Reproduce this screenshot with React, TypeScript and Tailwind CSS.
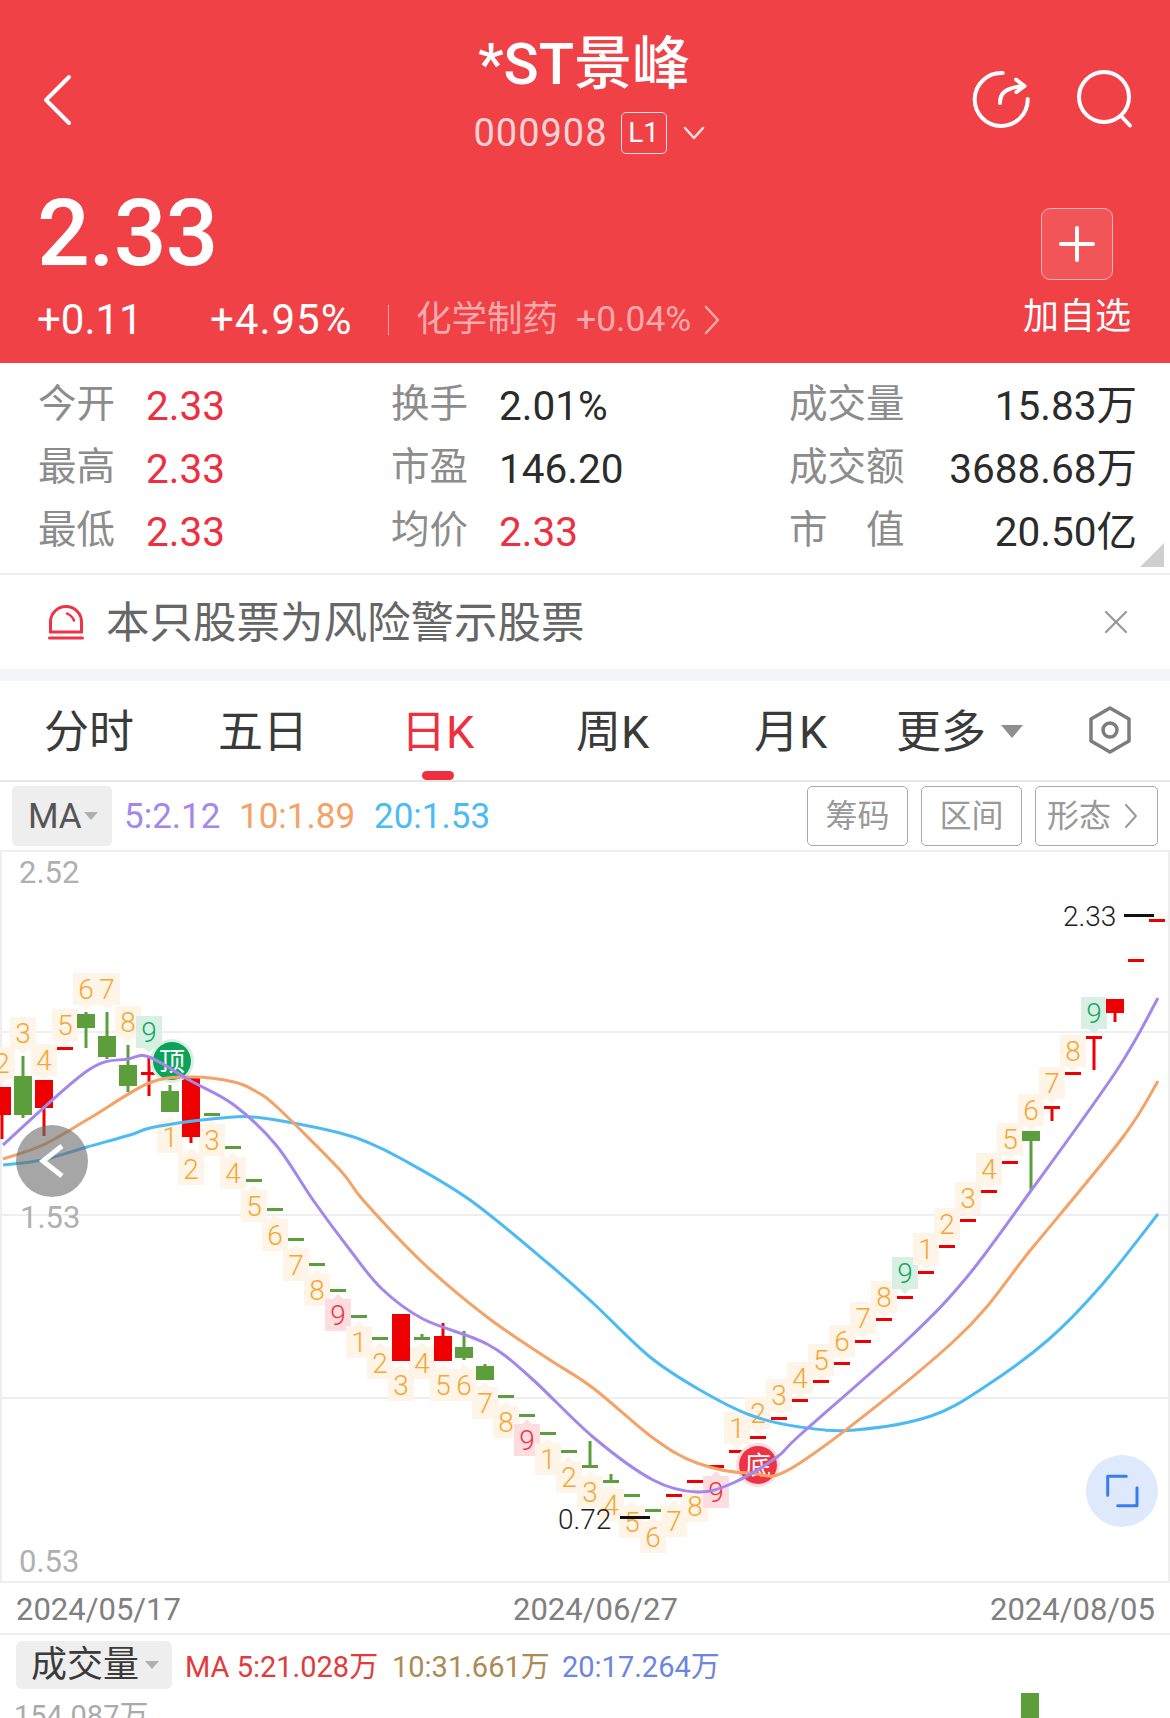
// K-line quote page: *ST景峰
import { ChevronRight, X } from 'lucide-react';

const SANS = "font-['Roboto','Noto_Sans_CJK_SC',sans-serif]";
const UP = '#ee0000';
const DOWN = '#5c9e3c';

// [x, kind, bodyTop, bodyBottom, wickTop, wickBottom]
type Candle = [number, 'r' | 'g', number, number, number, number];
const candles: Candle[] = [
  [2, 'r', 1087, 1115, 1087, 1139],
  [23, 'g', 1076, 1115, 1056, 1118],
  [44, 'r', 1080, 1108, 1080, 1136],
  [65, 'r', 1047, 1050, 1047, 1050],
  [86, 'g', 1014, 1028, 1012, 1048],
  [107, 'g', 1036, 1057, 1012, 1059],
  [128, 'g', 1065, 1086, 1045, 1092],
  [149, 'r', 1072, 1075, 1056, 1096],
  [170, 'g', 1091, 1112, 1085, 1112],
  [191, 'r', 1077, 1137, 1077, 1143],
  [212, 'g', 1113, 1116, 1113, 1116],
  [233, 'g', 1146, 1149, 1146, 1149],
  [254, 'g', 1179, 1182, 1179, 1182],
  [275, 'g', 1208, 1211, 1208, 1211],
  [296, 'g', 1238, 1241, 1238, 1241],
  [317, 'g', 1263, 1266, 1263, 1266],
  [338, 'g', 1289, 1292, 1289, 1292],
  [359, 'g', 1315, 1318, 1315, 1318],
  [380, 'g', 1337, 1340, 1337, 1340],
  [401, 'r', 1314, 1361, 1314, 1361],
  [422, 'g', 1337, 1340, 1334, 1340],
  [443, 'r', 1336, 1361, 1323, 1361],
  [464, 'g', 1347, 1358, 1331, 1360],
  [485, 'g', 1366, 1380, 1364, 1380],
  [506, 'g', 1395, 1398, 1395, 1398],
  [527, 'g', 1414, 1417, 1414, 1417],
  [548, 'g', 1432, 1435, 1432, 1435],
  [569, 'g', 1450, 1453, 1450, 1453],
  [590, 'g', 1465, 1468, 1441, 1468],
  [611, 'g', 1480, 1483, 1474, 1483],
  [632, 'g', 1494, 1497, 1494, 1497],
  [653, 'g', 1509, 1512, 1509, 1512],
  [674, 'r', 1494, 1497, 1494, 1497],
  [695, 'r', 1480, 1483, 1480, 1483],
  [716, 'r', 1465, 1468, 1465, 1468],
  [737, 'r', 1450, 1453, 1450, 1453],
  [758, 'r', 1436, 1439, 1436, 1439],
  [779, 'r', 1417, 1420, 1417, 1420],
  [800, 'r', 1399, 1402, 1399, 1402],
  [821, 'r', 1380, 1383, 1380, 1383],
  [842, 'r', 1362, 1365, 1362, 1365],
  [863, 'r', 1340, 1343, 1340, 1343],
  [884, 'r', 1318, 1321, 1318, 1321],
  [905, 'r', 1296, 1299, 1296, 1299],
  [926, 'r', 1271, 1274, 1271, 1274],
  [947, 'r', 1245, 1248, 1245, 1248],
  [968, 'r', 1219, 1222, 1219, 1222],
  [989, 'r', 1190, 1193, 1190, 1193],
  [1010, 'r', 1161, 1164, 1161, 1164],
  [1031, 'g', 1131, 1141, 1131, 1191],
  [1052, 'r', 1106, 1109, 1106, 1121],
  [1073, 'r', 1072, 1075, 1072, 1075],
  [1094, 'r', 1036, 1039, 1036, 1070],
  [1115, 'r', 999, 1013, 999, 1022],
  [1136, 'r', 959, 962, 959, 962],
  [1157, 'r', 919, 922, 919, 922],
];

// [digit, x, y, pointer direction, tone]
type Label = [string, number, number, 'u' | 'd', 'o' | 'g' | 'r'];
const labels: Label[] = [
  ['2', 2, 1063, 'd', 'o'], ['3', 23, 1033, 'd', 'o'], ['4', 44, 1060, 'd', 'o'], ['5', 65, 1025, 'd', 'o'],
  ['6', 86, 989, 'd', 'o'], ['7', 107, 989, 'd', 'o'], ['8', 128, 1022, 'd', 'o'], ['9', 149, 1032, 'd', 'g'],
  ['1', 170, 1137, 'u', 'o'], ['2', 191, 1169, 'u', 'o'], ['3', 212, 1140, 'u', 'o'], ['4', 233, 1173, 'u', 'o'],
  ['5', 254, 1206, 'u', 'o'], ['6', 275, 1235, 'u', 'o'], ['7', 296, 1265, 'u', 'o'], ['8', 317, 1290, 'u', 'o'],
  ['9', 338, 1315, 'u', 'r'], ['1', 359, 1342, 'u', 'o'], ['2', 380, 1363, 'u', 'o'], ['3', 401, 1385, 'u', 'o'],
  ['4', 422, 1363, 'u', 'o'], ['5', 443, 1385, 'u', 'o'], ['6', 464, 1385, 'u', 'o'], ['7', 485, 1403, 'u', 'o'],
  ['8', 506, 1422, 'u', 'o'], ['9', 527, 1440, 'u', 'r'], ['1', 548, 1459, 'u', 'o'], ['2', 569, 1477, 'u', 'o'],
  ['3', 590, 1492, 'u', 'o'], ['4', 611, 1505, 'u', 'o'], ['5', 632, 1522, 'u', 'o'], ['6', 653, 1537, 'u', 'o'],
  ['7', 674, 1521, 'u', 'o'], ['8', 695, 1506, 'u', 'o'], ['9', 716, 1492, 'u', 'r'], ['1', 737, 1428, 'd', 'o'],
  ['2', 758, 1413, 'd', 'o'], ['3', 779, 1395, 'd', 'o'], ['4', 800, 1378, 'd', 'o'], ['5', 821, 1360, 'd', 'o'],
  ['6', 842, 1341, 'd', 'o'], ['7', 863, 1318, 'd', 'o'], ['8', 884, 1297, 'd', 'o'], ['9', 905, 1273, 'd', 'g'],
  ['1', 926, 1249, 'd', 'o'], ['2', 947, 1224, 'd', 'o'], ['3', 968, 1198, 'd', 'o'], ['4', 989, 1169, 'd', 'o'],
  ['5', 1010, 1139, 'd', 'o'], ['6', 1031, 1110, 'd', 'o'], ['7', 1052, 1083, 'd', 'o'], ['8', 1073, 1051, 'd', 'o'],
  ['9', 1094, 1013, 'd', 'g'],
];

const toneFill = { o: '#fff4e8', g: '#d8f0e4', r: '#fddde0' };
const toneText = { o: '#f5a733', g: '#12a860', r: '#ee3344' };

const purple = [[3, 1145], [87, 1071], [128, 1059], [149, 1057], [191, 1081], [234, 1105], [276, 1145], [313, 1200], [350, 1250], [382, 1289], [423, 1319], [487, 1344], [530, 1377], [593, 1437], [653, 1480], [697, 1492], [733, 1483], [777, 1457], [800, 1435], [907, 1340], [967, 1277], [1030, 1192], [1117, 1070], [1158, 998]];
const orange = [[3, 1159], [43, 1145], [90, 1118], [149, 1083], [191, 1077], [234, 1082], [257, 1092], [277, 1107], [340, 1170], [363, 1200], [423, 1263], [487, 1317], [547, 1358], [593, 1388], [653, 1438], [697, 1463], [750, 1473], [800, 1463], [955, 1340], [1033, 1247], [1123, 1137], [1158, 1081]];
const blue = [[3, 1165], [42, 1160], [87, 1147], [130, 1135], [150, 1128], [193, 1121], [233, 1117], [253, 1117], [293, 1123], [340, 1133], [367, 1142], [400, 1158], [470, 1200], [550, 1265], [593, 1303], [650, 1357], [700, 1390], [750, 1415], [800, 1427], [855, 1430], [931, 1416], [986, 1386], [1048, 1340], [1100, 1287], [1158, 1214]];

// catmull-rom through the sampled points
function smooth(pts: number[][]) {
  let d = `M${pts[0][0]} ${pts[0][1]}`;
  for (let i = 0; i < pts.length - 1; i++) {
    const p0 = pts[Math.max(i - 1, 0)];
    const p1 = pts[i];
    const p2 = pts[i + 1];
    const p3 = pts[Math.min(i + 2, pts.length - 1)];
    const c1x = p1[0] + (p2[0] - p0[0]) / 6;
    const c1y = p1[1] + (p2[1] - p0[1]) / 6;
    const c2x = p2[0] - (p3[0] - p1[0]) / 6;
    const c2y = p2[1] - (p3[1] - p1[1]) / 6;
    d += ` C${c1x} ${c1y} ${c2x} ${c2y} ${p2[0]} ${p2[1]}`;
  }
  return d;
}

function KLine() {
  return (
    <svg viewBox="0 850 1170 731" width={1170} height={731} className="block">
      <line x1={0} x2={1170} y1={851} y2={851} stroke="#eeeeee" strokeWidth={2} />
      {[1032, 1215, 1398].map(y => (
        <line key={y} x1={2} x2={1168} y1={y} y2={y} stroke="#eeeeee" strokeWidth={2} />
      ))}
      <line x1={1} x2={1} y1={850} y2={1581} stroke="#eeeeee" strokeWidth={2} />
      <line x1={1169} x2={1169} y1={850} y2={1581} stroke="#eeeeee" strokeWidth={2} />

      <g fontFamily="Roboto, sans-serif" fontSize={31} fill="#b0b0b0">
        <text x={19} y={883}>2.52</text>
        <text x={20} y={1228}>1.53</text>
        <text x={19} y={1572}>0.53</text>
      </g>

      {labels.map(([d, x, y, dir, tone], i) => (
        <g key={i}>
          <rect x={x - 13} y={y - 16} width={26} height={32} fill={toneFill[tone]} />
          <polygon
            points={dir === 'd' ? `${x - 5},${y + 16} ${x + 5},${y + 16} ${x},${y + 21}` : `${x - 5},${y - 16} ${x + 5},${y - 16} ${x},${y - 21}`}
            fill={toneFill[tone]}
          />
          <text x={x} y={y + 10} textAnchor="middle" fontFamily="Roboto, sans-serif" fontWeight={300} fontSize={28} fill={toneText[tone]}>{d}</text>
        </g>
      ))}

      {candles.map(([x, k, t, b, wt, wb], i) => {
        const c = k === 'r' ? UP : DOWN;
        return (
          <g key={i}>
            <rect x={x - 1.5} y={wt} width={3} height={wb - wt} fill={c} />
            {b - t <= 3
              ? <rect x={x - 8} y={t} width={16} height={3} fill={c} />
              : <rect x={x - 9} y={t} width={18} height={b - t} fill={c} />}
          </g>
        );
      })}

      <circle cx={172} cy={1061} r={22} fill="#d8f0e4" />
      <circle cx={172} cy={1061} r={19} fill="#0ba35a" />
      <text x={172} y={1071} textAnchor="middle" fontFamily="'Noto Sans CJK SC', sans-serif" fontSize={26} fill="#ffffff">顶</text>
      <circle cx={758} cy={1465} r={22} fill="#fbdde0" />
      <circle cx={758} cy={1465} r={19} fill="#ee3344" />
      <text x={758} y={1475} textAnchor="middle" fontFamily="'Noto Sans CJK SC', sans-serif" fontSize={26} fill="#ffffff">底</text>

      <path d={smooth(blue)} fill="none" stroke="#4dbbf3" strokeWidth={3} />
      <path d={smooth(orange)} fill="none" stroke="#f4a266" strokeWidth={3} />
      <path d={smooth(purple)} fill="none" stroke="#a586ea" strokeWidth={3} />

      <g fontFamily="Roboto, sans-serif" fontSize={28} fontWeight={300} fill="#222222">
        <text x={558} y={1529}>0.72</text>
        <text x={1063} y={926}>2.33</text>
      </g>
      <rect x={620} y={1516} width={30} height={3} fill="#111111" />
      <rect x={1124} y={914} width={30} height={3} fill="#111111" />
    </svg>
  );
}

function StatRow({ cells }: { cells: [string, string, boolean][] }) {
  return (
    <div className="grid grid-cols-[353px_398px_1fr] h-[63px] items-center">
      {cells.map(([label, value, red], i) => (
        <div key={label} className={`flex items-center ${i === 2 ? 'justify-between' : ''}`}>
          <span className={`text-[38.5px] leading-none text-[#8c8c8c] ${i === 2 ? '' : 'w-[108px]'}`}>{label}</span>
          <span className={`text-[40.5px] leading-none mt-[4px] ${red ? 'text-[#ee2f40]' : 'text-[#2b2b2b]'}`}>{value}</span>
        </div>
      ))}
    </div>
  );
}

export default function App() {
  return (
    <div className={`${SANS} w-[1170px] h-[1718px] overflow-hidden bg-white`}>
      {/* Red quote header */}
      <div className="h-[363px] bg-[#f04147] text-white flex flex-col">
        <div className="h-[180px] flex items-start justify-between">
          <svg width="34" height="52" viewBox="0 0 34 52" className="ml-[41px] mt-[74px]" fill="none" stroke="#ffffff" strokeWidth="4" strokeLinecap="round" strokeLinejoin="round">
            <path d="M28 3 5 26l23 23" />
          </svg>
          <div className="flex flex-col items-center ml-[132px]">
            <div className="text-[58px] leading-none font-medium mt-[35px] mr-[10px]">*ST景峰</div>
            <div className="flex items-center mt-[19px]">
              <span className="text-[38px] leading-none tracking-[1px] text-[#fdd3d5]">000908</span>
              <span className="ml-[13px] w-[46px] h-[42px] rounded-[5px] border border-[#fde0e0] flex items-center justify-center text-[28px] leading-none">L1</span>
              <svg width="22" height="14" viewBox="0 0 22 14" fill="none" stroke="#fde0e0" strokeWidth="2.500" strokeLinecap="round" strokeLinejoin="round" className="ml-[16px]">
                <path d="M2 2l9 10 9-10" />
              </svg>
            </div>
          </div>
          <div className="flex items-center gap-[45px] mr-[36px] mt-[68px]">
            <svg width="60" height="62" viewBox="0 0 60 62" fill="none" stroke="#ffffff" strokeWidth="4" strokeLinecap="round" strokeLinejoin="round">
              <path d="M31.700 5A26.500 26.500 0 1 0 56.700 31" />
              <path d="M29 35c0-9 4-15 23-17" />
              <path d="M45 11.500l8.500 6.500-8 6" />
            </svg>
            <svg width="58" height="60" viewBox="0 0 58 60" fill="none" stroke="#ffffff" strokeWidth="4" strokeLinecap="round">
              <circle cx="28" cy="28" r="25" />
              <path d="M45.500 47.500l8.500 9" />
            </svg>
          </div>
        </div>
        <div className="flex justify-between items-start">
          <div className="pl-[37px]">
            <div className="text-[93px] leading-none font-medium tracking-[-1px] mt-[7px]">2.33</div>
            <div className="flex items-center h-[44px] mt-[18px]">
              <span className="text-[42px] leading-none w-[173px]">+0.11</span>
              <span className="text-[42px] leading-none tracking-[1px] w-[178px]">+4.95%</span>
              <span className="w-px h-[30px] bg-[#f9a0a2]" />
              <span className="ml-[27px] text-[35.500px] leading-none text-[#f9a9aa]">化学制药</span>
              <span className="ml-[18px] text-[35.500px] leading-none text-[#f9a9aa]">+0.04%</span>
              <svg width="18" height="30" viewBox="0 0 18 30" fill="none" stroke="#f9a9aa" strokeWidth="2.500" strokeLinecap="round" strokeLinejoin="round" className="ml-[12px]">
                <path d="M3 2l12 13L3 28" />
              </svg>
            </div>
          </div>
          <div className="flex flex-col items-center mr-[39px] mt-[28px]">
            <div className="w-[72px] h-[72px] rounded-[9px] border border-[#f9b4b5] bg-[#f25558] flex items-center justify-center">
              <svg width="36" height="36" viewBox="0 0 36 36" stroke="#ffffff" strokeWidth="4" strokeLinecap="round">
                <path d="M18 2v32M2 18h32" />
              </svg>
            </div>
            <span className="mt-[19px] text-[36px] leading-none">加自选</span>
          </div>
        </div>
      </div>

      {/* Quote stats */}
      <div className="h-[212px] pl-[38px] pr-[33px] pt-[10px] border-b-2 border-[#ececec] relative">
        <StatRow cells={[['今开', '2.33', true], ['换手', '2.01%', false], ['成交量', '15.83万', false]]} />
        <StatRow cells={[['最高', '2.33', true], ['市盈', '146.20', false], ['成交额', '3688.68万', false]]} />
        <StatRow cells={[['最低', '2.33', true], ['均价', '2.33', true], ['市　值', '20.50亿', false]]} />
        <div className="absolute right-[6px] bottom-[6px] w-0 h-0 border-l-[24px] border-l-transparent border-b-[24px] border-b-[#cfcfcf]" />
      </div>

      {/* Risk notice */}
      <div className="h-[94px] flex items-center justify-between pl-[48px] pr-[34px]">
        <div className="flex items-center">
          <svg width="36" height="36" viewBox="0 0 36 36" fill="none" stroke="#ee3344" strokeWidth="3" strokeLinecap="round">
            <path d="M2.500 28V18a15.500 15.500 0 0 1 31 0v10z" />
            <path d="M19 9.500c3 1.500 6 4 7 7" strokeWidth="2.500" />
            <path d="M1.500 34h33" />
          </svg>
          <span className="ml-[22px] mt-[3px] text-[43.500px] leading-none text-[#666666]">本只股票为风险警示股票</span>
        </div>
        <X size={40} strokeWidth={1.4} className="text-[#9a9a9a]" />
      </div>
      <div className="h-[12px] bg-[#f3f5f9]" />

      {/* Period tabs */}
      <div className="h-[101px] border-b-2 border-[#e6e6e6] relative text-[45px] leading-none text-[#3a3a3a]">
        <div className="flex items-center h-full pt-[4px] pl-[44px]">
          <span className="w-[174px]">分时</span>
          <span className="w-[183px]">五日</span>
          <span className="w-[175px] text-[#ee2f40]">日K</span>
          <span className="w-[178px]">周K</span>
          <span className="w-[142px]">月K</span>
          <span>更多</span>
          <span className="ml-[15px] -mt-[2px] w-0 h-0 border-x-[11px] border-x-transparent border-t-[13px] border-t-[#8f8f8f]" />
          <svg width="44" height="48" viewBox="0 0 44 48" fill="none" stroke="#7d7d7d" strokeWidth="3.500" strokeLinejoin="round" className="ml-[65px] -mt-[6px]">
            <path d="M22 2 41 13v22L22 46 3 35V13z" />
            <circle cx="22" cy="24" r="7" />
          </svg>
        </div>
        <div className="absolute left-[422px] bottom-0 w-[32px] h-[9px] rounded-full bg-[#ee2f40]" />
      </div>

      {/* MA legend */}
      <div className="h-[68px] flex items-center pl-[12px] pr-[12px]">
        <div className="w-[100px] h-[60px] rounded-[5px] bg-[#eeeeee] flex items-center pl-[16px]">
          <span className="text-[35px] leading-none text-[#555555]">MA</span>
          <span className="ml-[2px] w-0 h-0 border-x-[7px] border-x-transparent border-t-[8px] border-t-[#b0b0b0]" />
        </div>
        <div className="flex items-center ml-[12px] text-[35px] leading-none">
          <span className="w-[115px] text-[#a586ea]">5:2.12</span>
          <span className="w-[135px] text-[#f4a266]">10:1.89</span>
          <span className="text-[#4dbbf3]">20:1.53</span>
        </div>
        <div className="ml-auto flex gap-[13px] text-[32px] leading-none text-[#999999]">
          <div className="w-[101px] h-[60px] rounded-[5px] border border-[#aaaaaa] flex items-center justify-center">筹码</div>
          <div className="w-[101px] h-[60px] rounded-[5px] border border-[#aaaaaa] flex items-center justify-center">区间</div>
          <div className="w-[123px] h-[60px] rounded-[5px] border border-[#aaaaaa] flex items-center pl-[11px]">
            形态
            <svg width="16" height="26" viewBox="0 0 16 26" fill="none" stroke="#999999" strokeWidth="2" strokeLinecap="round" strokeLinejoin="round" className="ml-[12px]">
              <path d="M3 2l10 11L3 24" />
            </svg>
          </div>
        </div>
      </div>

      {/* Chart */}
      <div className="relative">
        <KLine />
        <div className="absolute left-[16px] top-[275px] w-[72px] h-[72px] rounded-full bg-[#6b6b6b]/60 flex items-center justify-center">
          <svg width="34" height="36" viewBox="0 0 34 36" fill="none" stroke="#ffffff" strokeWidth="5">
            <path d="M27 3 8 18l19 15" />
          </svg>
        </div>
        <div className="absolute left-[1086px] top-[605px] w-[72px] h-[72px] rounded-full bg-[#dee9fc] flex items-center justify-center">
          <svg width="34" height="34" viewBox="0 0 34 34" fill="none" stroke="#3a7cf0" strokeWidth="3" strokeLinecap="round" strokeLinejoin="round">
            <path d="M2.700 21.300V2.300h18.600M32 13.700v18H12.700" />
          </svg>
        </div>
      </div>

      {/* Date axis */}
      <div className="h-[54px] border-y-2 border-[#eeeeee] flex items-center pt-[3px] pl-[16px] text-[31px] leading-none text-[#808080]">
        <span className="w-[497px]">2024/05/17</span>
        <span className="w-[477px]">2024/06/27</span>
        <span>2024/08/05</span>
      </div>

      {/* Volume */}
      <div className="relative h-[83px] pl-[16px] pt-[6px]">
        <div className="flex items-center">
          <div className="w-[156px] h-[48px] rounded-[6px] bg-[#eeeeee] flex items-center pl-[15px]">
            <span className="text-[36px] leading-none text-[#3a3a3a]">成交量</span>
            <span className="ml-[6px] w-0 h-0 border-x-[7px] border-x-transparent border-t-[8px] border-t-[#b0b0b0]" />
          </div>
          <div className="flex items-center ml-[13px] mt-[4px] text-[29px] leading-none">
            <span className="w-[207px] text-[#e03c3c]">MA 5:21.028万</span>
            <span className="w-[170px] text-[#ad8a55]">10:31.661万</span>
            <span className="text-[#6b85e0]">20:17.264万</span>
          </div>
        </div>
        <div className="mt-[13px] text-[29px] leading-none text-[#aaaaaa] -ml-[2px]">154.087万</div>
        <div className="absolute left-[1021px] top-[58px] w-[18px] h-[26px] bg-[#5c9e3c]" />
      </div>
    </div>
  );
}
